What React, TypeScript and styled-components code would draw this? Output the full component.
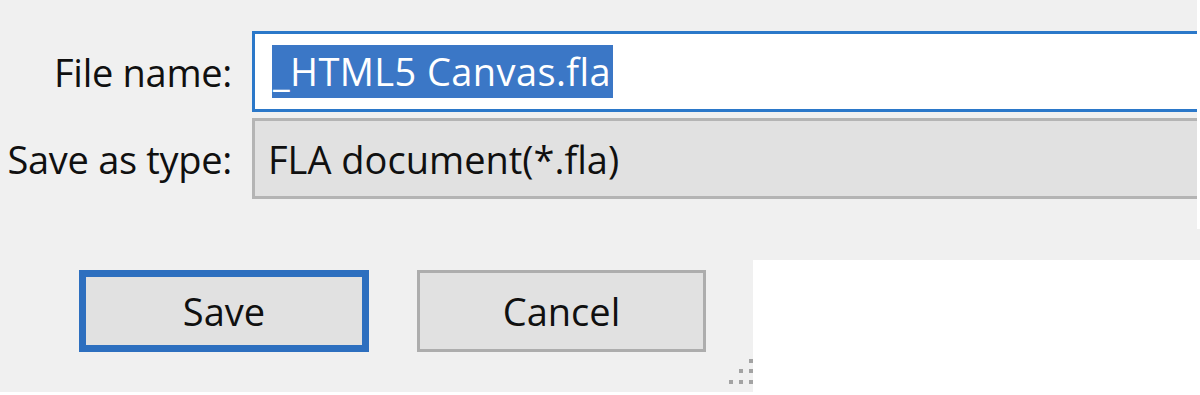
import styled, { createGlobalStyle } from "styled-components";

const Global = createGlobalStyle`
  html, body {
    margin: 0;
    padding: 0;
    background: #ffffff;
  }
  body {
    font-family: "Open Sans", "Noto Sans", sans-serif;
  }
`;

const Dialog = styled.div`
  width: 1200px;
  height: 395px;
  background: #f0f0f0;
  display: flex;
  flex-direction: column;
  overflow: hidden;
  font-size: 38px;
  font-weight: 500;
  color: #101010;
`;

const Form = styled.div`
  display: grid;
  grid-template-columns: 252px 1fr;
  grid-auto-rows: 81px;
  row-gap: 6px;
  padding-top: 31px;
  border-right: 3px solid #ffffff;
  height: 229px;
  box-sizing: border-box;
`;

const Label = styled.label`
  display: flex;
  align-items: center;
  justify-content: flex-end;
  padding-right: 20px;
  white-space: nowrap;
  letter-spacing: -0.3px;
`;

const Field = styled.div<{ $kind: "text" | "combo" }>`
  display: flex;
  align-items: center;
  box-sizing: border-box;
  border: 3px solid ${(p) => (p.$kind === "text" ? "#2b78c9" : "#b4b4b4")};
  border-right: none;
  background: ${(p) => (p.$kind === "text" ? "#ffffff" : "#e1e1e1")};
  padding-left: ${(p) => (p.$kind === "text" ? "17px" : "13px")};
  white-space: nowrap;
`;

const Selection = styled.span`
  background: #3b77c6;
  color: #ffffff;
  line-height: 53px;
  padding: 0 2px 0 1px;
  letter-spacing: 0.4px;
`;

const BottomRow = styled.div`
  flex: 1;
  display: flex;
  margin-top: 31px;
`;

const ButtonArea = styled.div`
  position: relative;
  width: 753px;
  display: flex;
  align-items: flex-start;
  gap: 48px;
  padding: 10px 0 0 79px;
  box-sizing: border-box;
  border-bottom: 3px solid #ffffff;
`;

const Button = styled.button<{ $default?: boolean }>`
  width: ${(p) => (p.$default ? "290px" : "289px")};
  height: 82px;
  box-sizing: border-box;
  background: #e1e1e1;
  border: ${(p) => (p.$default ? "7px solid #2d6fbf" : "3px solid #adadad")};
  font-family: inherit;
  font-size: 38px;
  font-weight: 500;
  color: #101010;
  padding: 0;
`;

const Grip = styled.svg`
  position: absolute;
  right: 0;
  bottom: 5px;
`;

const WhitePatch = styled.div`
  flex: 1;
  background: #ffffff;
`;

export default function App() {
  return (
    <>
      <Global />
      <Dialog>
        <Form>
          <Label>File name:</Label>
          <Field $kind="text">
            <Selection>_HTML5 Canvas.fla</Selection>
          </Field>
          <Label>Save as type:</Label>
          <Field $kind="combo">FLA document(*.fla)</Field>
        </Form>
        <BottomRow>
          <ButtonArea>
            <Button $default>Save</Button>
            <Button>Cancel</Button>
            <Grip width="24" height="28" viewBox="0 0 24 28">
              <g fill="#a3a3a3">
                <rect x="20" y="0" width="4" height="4" />
                <rect x="10" y="10" width="4" height="4" />
                <rect x="20" y="10" width="4" height="4" />
                <rect x="0" y="21" width="4" height="4" />
                <rect x="10" y="21" width="4" height="4" />
                <rect x="20" y="21" width="4" height="4" />
              </g>
            </Grip>
          </ButtonArea>
          <WhitePatch />
        </BottomRow>
      </Dialog>
    </>
  );
}
